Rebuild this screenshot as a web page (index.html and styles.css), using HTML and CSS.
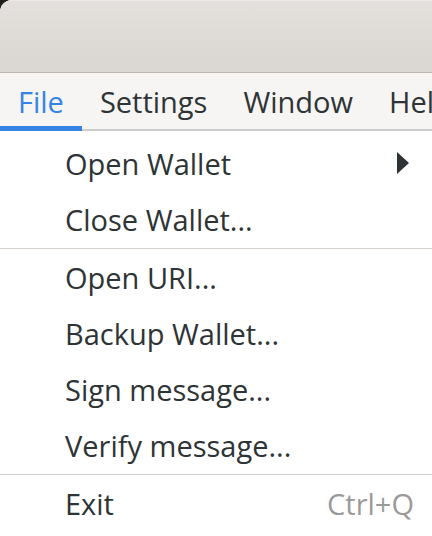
FILE: index.html
```html
<!DOCTYPE html>
<html>
<head>
<meta charset="utf-8">
<link rel="stylesheet" href="styles.css">
</head>
<body>
<div class="window">
  <div class="titlebar"></div>
  <nav class="menubar">
    <div class="mb-item active">File</div>
    <div class="mb-item">Settings</div>
    <div class="mb-item">Window</div>
    <div class="mb-item">Help</div>
  </nav>
  <div class="menu">
    <div class="row"><span class="label">Open Wallet</span><svg class="arrow" width="12" height="22" viewBox="0 0 12 22"><polygon points="0,0 12,11 0,22" fill="#2e3436"/></svg></div>
    <div class="row"><span class="label">Close Wallet...</span></div>
    <div class="sep"></div>
    <div class="row"><span class="label">Open URI...</span></div>
    <div class="row"><span class="label">Backup Wallet...</span></div>
    <div class="row"><span class="label">Sign message...</span></div>
    <div class="row"><span class="label">Verify message...</span></div>
    <div class="sep"></div>
    <div class="row"><span class="label">Exit</span><span class="accel">Ctrl+Q</span></div>
  </div>
</div>
</body>
</html>
```

FILE: styles.css
```css
html, body {
  margin: 0;
  padding: 0;
  background: #1e1e1e;
  width: 432px;
  height: 536px;
  overflow: hidden;
}
.window {
  width: 432px;
  height: 536px;
  background: #ffffff;
  border-top-left-radius: 12px;
  overflow: hidden;
  font-family: "Open Sans", "Noto Sans", sans-serif;
  color: #2e3436;
}
.titlebar {
  height: 72px;
  background: linear-gradient(#e3e0dd, #dad6d2);
  box-shadow: inset 0 1px 0 #ece9e7;
  border-bottom: 1px solid #bdb6af;
}
.menubar {
  display: flex;
  height: 58px;
  background: #f6f5f4;
  white-space: nowrap;
  overflow: hidden;
}
.mb-item {
  box-sizing: border-box;
  height: 58px;
  padding: 0 18px 0 18px;
  display: flex;
  align-items: center;
  font-size: 29px;
  line-height: 29px;
  border-bottom: 2px solid #cbcbcb;
  flex: none;
}
.mb-item.active {
  color: #3584e4;
  border-bottom: 5px solid #3584e4;
  padding-top: 3px;
}
.menu {
  padding-top: 4px;
  background: #ffffff;
}
.row {
  height: 56px;
  display: flex;
  align-items: center;
  padding: 0 18px 0 65px;
  font-size: 29px;
  line-height: 29px;
}
.label {
  flex: 1;
}
.arrow {
  margin-right: 5px;
  flex: none;
}
.accel {
  color: #9a9a9a;
}
.sep {
  height: 1px;
  margin: 0.5px 0;
  background: #d5d0cc;
}
```
